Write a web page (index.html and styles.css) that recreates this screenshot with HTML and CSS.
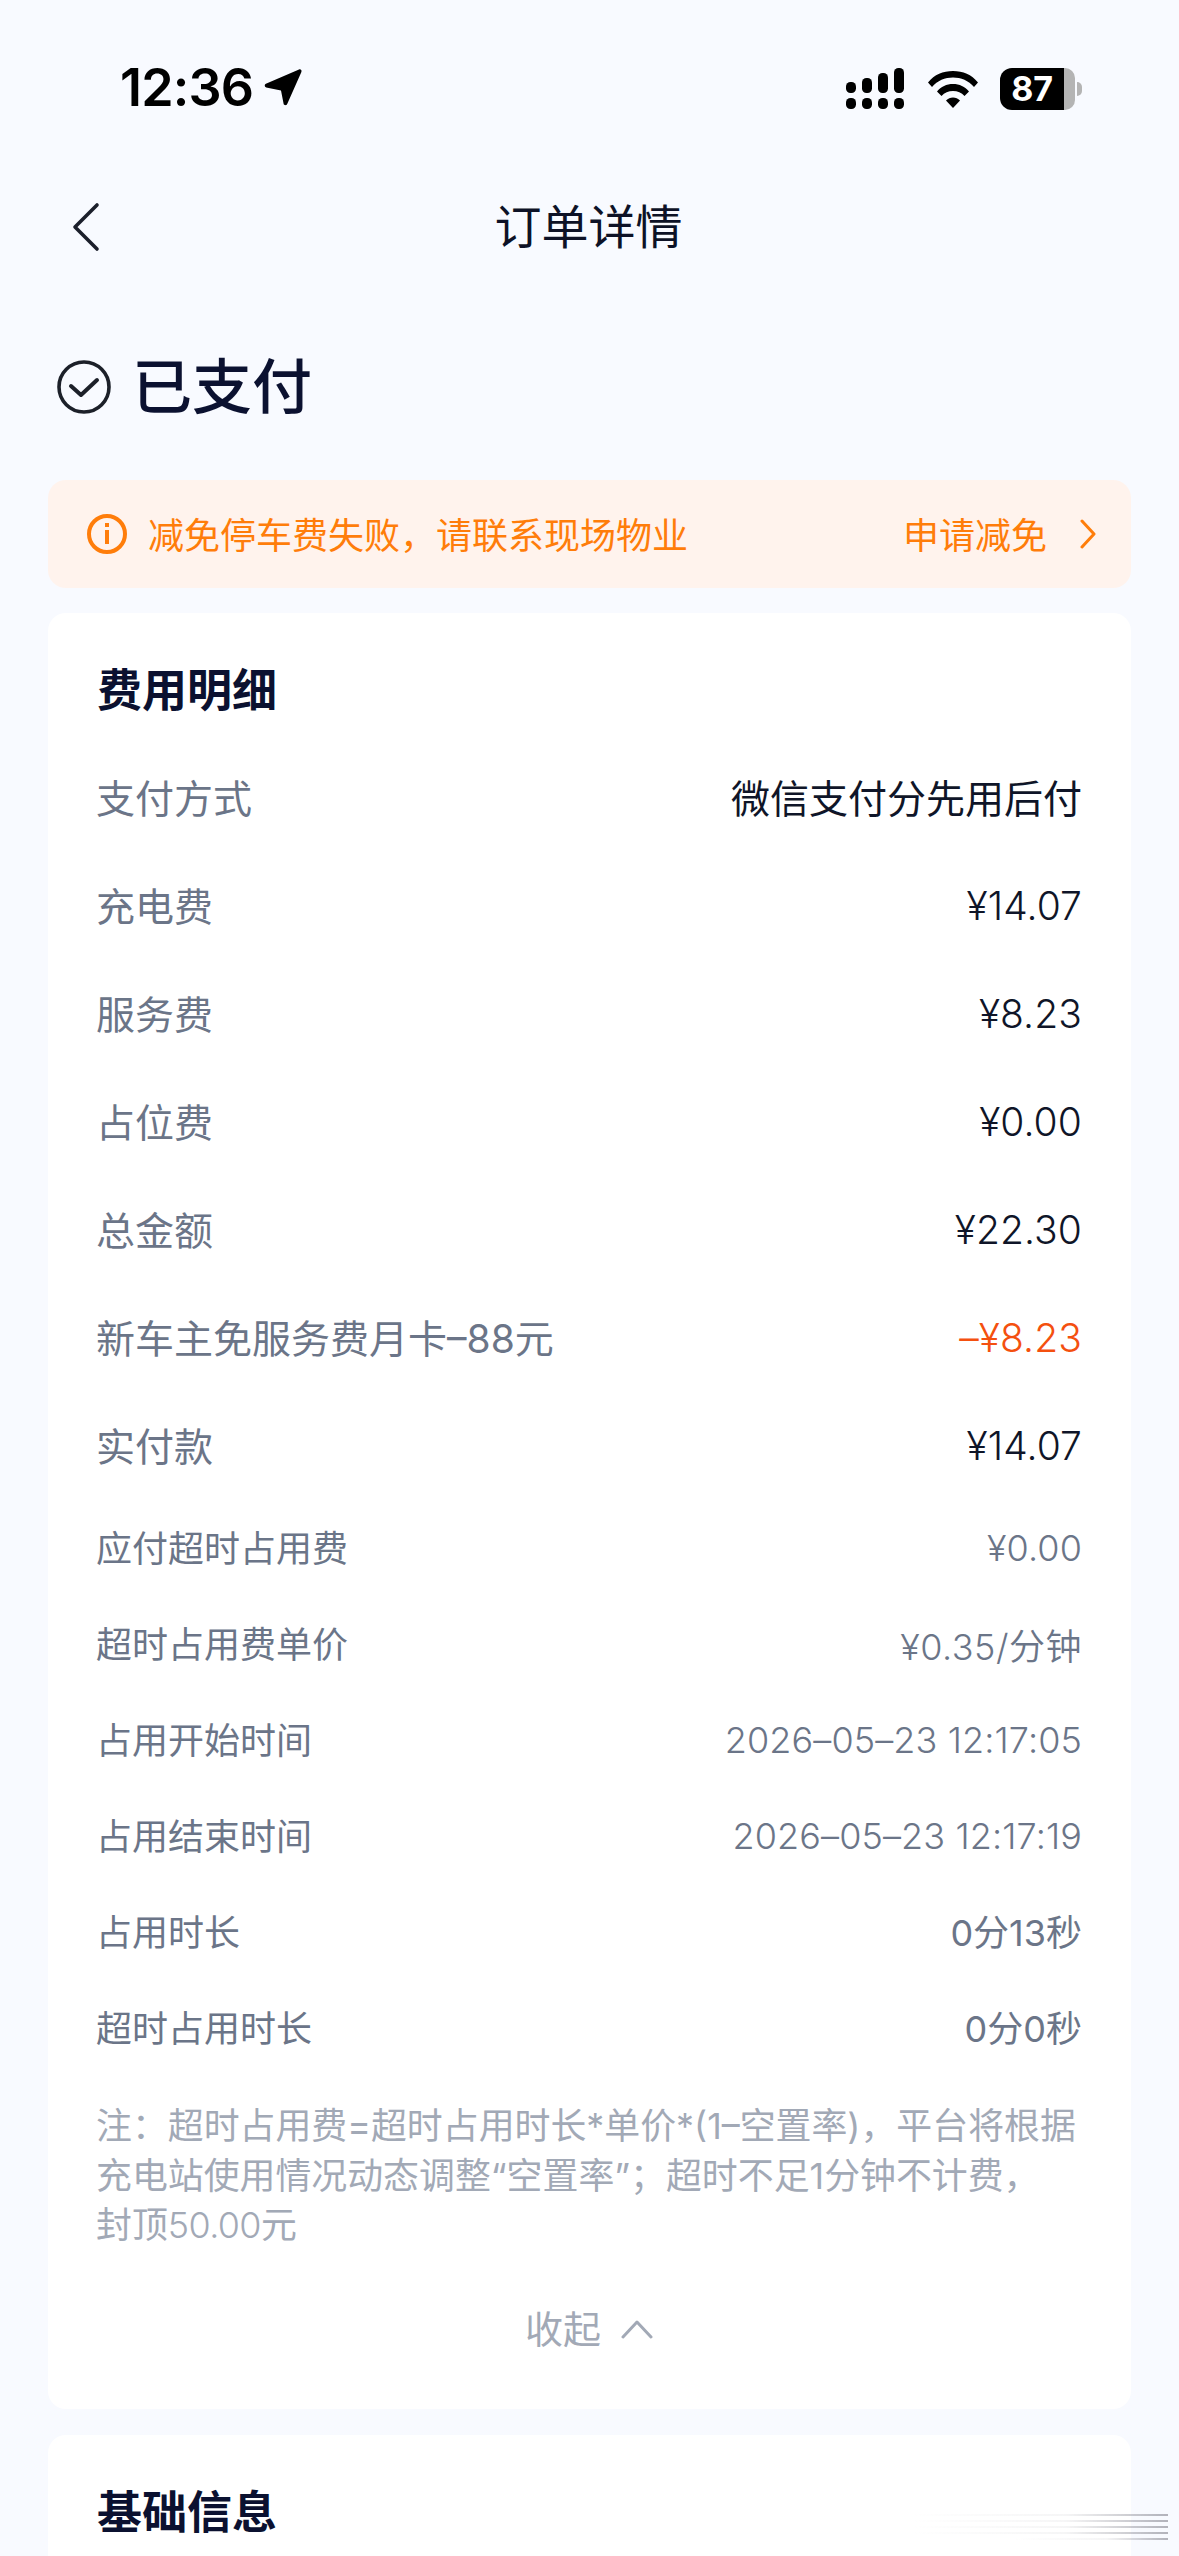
FILE: index.html
```html
<!DOCTYPE html>
<html lang="zh-CN">
<head>
<meta charset="utf-8">
<title>订单详情</title>
<link rel="stylesheet" href="styles.css">
</head>
<body>
<div class="page">
  <header class="status">
    <div class="status-left">
      <span class="time">12:36</span>
      <svg class="loc" width="40" height="40" viewBox="0 0 40 40"><path d="M36 2.5c1.6-.6 3 .8 2.4 2.4L24.2 37c-.8 1.7-3.2 1.5-3.6-.3L18 23.5 3.2 20.4c-1.8-.4-2-2.8-.3-3.6z" fill="#000"/></svg>
    </div>
    <div class="status-right">
      <svg class="signal" width="60" height="42" viewBox="0 0 60 42" fill="#000">
        <rect x="0" y="14" width="10" height="11" rx="4.5"/><rect x="16" y="10" width="10" height="15" rx="4.5"/><rect x="32" y="5" width="10" height="20" rx="4.5"/><rect x="48" y="0" width="10" height="25" rx="4.5"/>
        <rect x="0" y="30" width="10" height="11" rx="4.5"/><rect x="16" y="30" width="10" height="11" rx="4.5"/><rect x="32" y="30" width="10" height="11" rx="4.5"/><rect x="48" y="30" width="10" height="11" rx="4.5"/>
      </svg>
      <svg class="wifi" width="50" height="38" viewBox="0 0 50 38" fill="#000">
        <path d="M0 12.5C6.500 4.500 15 1 25 1s18.500 3.500 25 11.500l-4 4.500C40.500 10.500 33 7.500 25 7.500S9.500 10.500 4 17z"/>
        <path d="M9 21.500C13 16.500 18.500 14 25 14s12 2.500 16 7.500l-4.500 4.500C33.500 22.500 29.500 21 25 21s-8.500 1.500-11.500 5z"/>
        <path d="M18 30.500c2-2 4.300-3 7-3s5 1 7 3l-7 7.500z"/>
      </svg>
      <div class="battery"><span class="batt-fill"><span class="batt-num">87</span></span><span class="batt-rest"></span><span class="batt-tip"></span></div>
    </div>
  </header>

  <nav class="nav">
    <svg class="back" width="28" height="50" viewBox="0 0 28 50"><path d="M25 3 3 25l22 22" fill="none" stroke="#1b1f2b" stroke-width="3.600" stroke-linecap="round" stroke-linejoin="round"/></svg>
    <h1 class="nav-title">订单详情</h1>
  </nav>

  <div class="state">
    <svg class="check" width="54" height="54" viewBox="0 0 54 54"><circle cx="27" cy="27" r="25" fill="none" stroke="#1c2029" stroke-width="3.600"/><path d="M14 26l10 9 16-15" fill="none" stroke="#1c2029" stroke-width="4" stroke-linecap="round" stroke-linejoin="round"/></svg>
    <span class="state-text">已支付</span>
  </div>

  <div class="notice">
    <div class="notice-left">
      <svg class="info" width="40" height="40" viewBox="0 0 40 40"><circle cx="20" cy="20" r="18" fill="none" stroke="#ff7d0a" stroke-width="4"/><rect x="18" y="9" width="4" height="4" fill="#ff7d0a"/><rect x="18" y="16" width="4" height="14" fill="#ff7d0a"/></svg>
      <span class="notice-text">减免停车费失败，请联系现场物业</span>
    </div>
    <div class="notice-right">
      <span class="notice-text">申请减免</span>
      <svg class="chev" width="18" height="30" viewBox="0 0 18 30"><path d="M3 2l12 13L3 28" fill="none" stroke="#ff7d0a" stroke-width="3" stroke-linecap="round" stroke-linejoin="round"/></svg>
    </div>
  </div>

  <section class="card fee">
    <h2 class="card-title">费用明细</h2>
    <div class="rows">
      <div class="row"><span class="k">支付方式</span><span class="v">微信支付分先用后付</span></div>
      <div class="row"><span class="k">充电费</span><span class="v num">¥14.07</span></div>
      <div class="row"><span class="k">服务费</span><span class="v num">¥8.23</span></div>
      <div class="row"><span class="k">占位费</span><span class="v num">¥0.00</span></div>
      <div class="row"><span class="k">总金额</span><span class="v num">¥22.30</span></div>
      <div class="row"><span class="k">新车主免服务费月卡–88元</span><span class="v red num">–¥8.23</span></div>
      <div class="row"><span class="k">实付款</span><span class="v num">¥14.07</span></div>
    </div>
    <div class="subrows">
      <div class="sub"><span>应付超时占用费</span><span class="num">¥0.00</span></div>
      <div class="sub"><span>超时占用费单价</span><span class="price">¥0.35/分钟</span></div>
      <div class="sub"><span>占用开始时间</span><span class="date">2026–05–23 12:17:05</span></div>
      <div class="sub"><span>占用结束时间</span><span class="date">2026–05–23 12:17:19</span></div>
      <div class="sub"><span>占用时长</span><span>0分13秒</span></div>
      <div class="sub"><span>超时占用时长</span><span>0分0秒</span></div>
    </div>
    <p class="note">注：超时占用费=超时占用时长*单价*(1–空置率)，平台将根据<br>充电站使用情况动态调整“空置率”；超时不足1分钟不计费，<br>封顶<span class="num">50.00</span>元</p>
    <div class="collapse"><span>收起</span><svg width="32" height="20" viewBox="0 0 32 20"><path d="M2 18 16 3l14 15" fill="none" stroke="#a2a9b6" stroke-width="3" stroke-linecap="round" stroke-linejoin="round"/></svg></div>
  </section>

  <section class="card base">
    <h2 class="card-title">基础信息</h2>
  </section>

  <div class="watermark"><i></i><i></i><i></i><i></i><i></i></div>
</div>
</body>
</html>
```

FILE: styles.css
```css
* { box-sizing: border-box; }
html, body { margin: 0; padding: 0; }
body {
  background: #f8faff;
  font-family: Inter, "Noto Sans CJK SC", sans-serif;
  color: #0d1226;
}
.page { position: relative; width: 1179px; height: 2556px; overflow: hidden; display: flex; flex-direction: column; }
.page > * { flex: none; }
.status { height: 174px; padding: 61px 97px 0 120px; display: flex; justify-content: space-between; align-items: flex-start; }
.status-left { display: flex; align-items: center; gap: 10px; height: 54px; }
.time { font-family: Inter, sans-serif; font-size: 52px; font-weight: 600; color: #000; letter-spacing: -.8px; line-height: 54px; }
.loc { margin-top: -2px; }
.status-right { display: flex; align-items: center; gap: 22px; height: 54px; padding-top: 1px; }
.battery { display: flex; align-items: center; width: 82px; height: 42px; position: relative; }
.batt-fill { width: 66px; height: 42px; background: #000; border-radius: 12px 0 0 12px; display: flex; align-items: center; justify-content: center; }
.batt-num { color: #fff; font-family: Inter, sans-serif; font-size: 34px; font-weight: 700; line-height: 42px; }
.batt-rest { width: 11px; height: 42px; background: #b4b4b4; border-radius: 0 10px 10px 0; }
.batt-tip { width: 5px; height: 14px; background: #b4b4b4; border-radius: 0 6px 6px 0; margin-left: 2px; }
.nav { height: 106px; padding-left: 72px; display: flex; align-items: center; position: relative; }
.nav-title { position: absolute; left: 0; right: 0; margin: 0; text-align: center; font-size: 47px; font-weight: 400; color: #0d1226; line-height: 60px; transform: translateX(-1px); }
.state { margin-top: 72px; padding-left: 57px; display: flex; align-items: center; gap: 21px; height: 70px; }
.state-text { font-size: 60px; font-weight: 500; color: #0b1130; line-height: 70px; }
.notice { margin: 58px 48px 0; height: 108px; background: #fff3ed; border-radius: 18px; padding: 0 34px 0 39px; display: flex; justify-content: space-between; align-items: center; color: #ff7d0a; font-size: 36px; }
.notice-text { margin-top: -3px; }
.notice-left { display: flex; align-items: center; gap: 21px; }
.notice-right { display: flex; align-items: center; gap: 32px; }
.card { margin: 25px 48px 0; background: #fff; border-radius: 18px; padding: 0 49px 0 48px; }
.card.fee { height: 1796px; }
.card.base { margin-top: 26px; height: 200px; }
.card-title { margin: 0; padding-top: 48px; padding-left: 1px; font-size: 45px; font-weight: 700; line-height: 60px; color: #0b1130; }
.rows { margin-top: 21px; }
.row { height: 108px; display: flex; justify-content: space-between; align-items: center; font-size: 39px; }
.k { color: #6b7588; }
.v { color: #0f1528; }
.num { letter-spacing: .1px; padding-top: 3px; font-weight: 350; }
.date { letter-spacing: .12px; padding-top: 3px; font-weight: 350; }
.price { letter-spacing: .5px; padding-top: 3px; font-weight: 350; }
.red { color: #f4500f; }
.sub { height: 96px; display: flex; justify-content: space-between; align-items: center; font-size: 36px; color: #6b7588; }
.note { margin: 28px 0 0; font-size: 35.9px; line-height: 49.5px; color: #a2a9b6; }
.note .num { letter-spacing: -.6px; padding-top: 0; }
.collapse { margin-top: 53px; display: flex; justify-content: center; align-items: center; gap: 20px; color: #a2a9b6; font-size: 38px; line-height: 50px; }
.watermark { position: absolute; right: 11px; bottom: 16px; width: 255px; display: flex; flex-direction: column; align-items: flex-end; gap: 4px; filter: blur(.6px); }
.watermark i { display: block; width: 100%; height: 2px; background: linear-gradient(to right, rgba(190,190,195,0), rgba(190,190,195,.15) 60%, rgba(140,140,150,.65)); }
.watermark i:last-child { width: 60%; }
```
